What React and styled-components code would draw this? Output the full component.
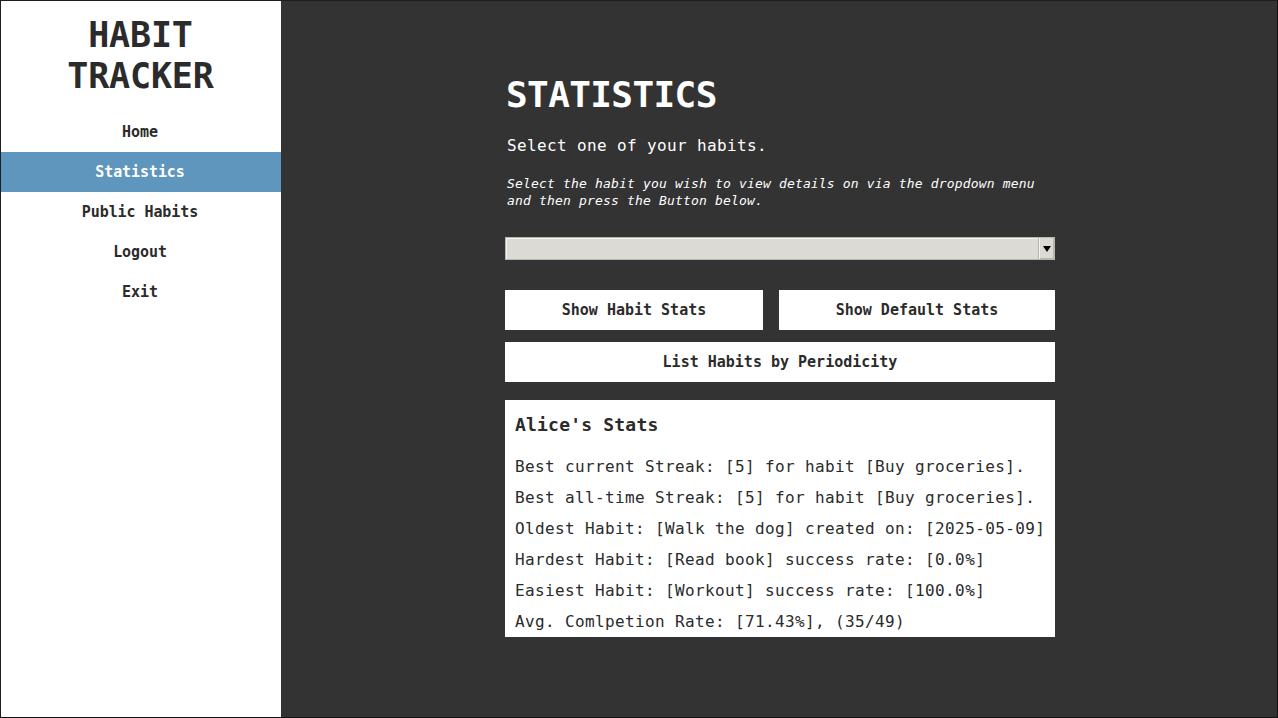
import React from 'react';
import styled, { createGlobalStyle } from 'styled-components';

const GlobalStyle = createGlobalStyle`
  html, body {
    margin: 0;
    padding: 0;
    height: 100%;
    background: #333333;
  }
  #root {
    height: 100%;
  }
  * {
    box-sizing: border-box;
  }
`;

const mono = `"DejaVu Sans Mono", "Liberation Mono", monospace`;

// whole window, thin dark frame round it
const Frame = styled.div`
  display: flex;
  width: 1278px;
  height: 718px;
  border: 1px solid #1e1e1e;
  border-right-color: #111;
  border-bottom-color: #111;
  background: #333333;
  font-family: ${mono};
  overflow: hidden;
`;

const Sidebar = styled.nav`
  width: 280px;
  flex-shrink: 0;
  background: #ffffff;
  display: flex;
  flex-direction: column;
  padding-top: 14px;
`;

const Brand = styled.h1`
  margin: 0 0 15px -1px;
  font-size: 35px;
  line-height: 41px;
  font-weight: bold;
  letter-spacing: -0.15px;
  text-align: center;
  color: #2b2b2b;
`;

const NavItem = styled.a`
  display: flex;
  align-items: center;
  justify-content: center;
  height: 40px;
  padding-right: 2px;
  font-size: 15px;
  font-weight: bold;
  letter-spacing: -0.08px;
  color: ${p => (p.$active ? '#ffffff' : '#2b2b2b')};
  background: ${p => (p.$active ? '#5e96be' : 'transparent')};
  text-decoration: none;
  cursor: pointer;
`;

const Main = styled.main`
  flex: 1;
  display: flex;
  justify-content: center;
  padding: 72px 0 0 2px;
`;

const Column = styled.section`
  width: 550px;
  display: flex;
  flex-direction: column;
`;

const Title = styled.h2`
  margin: 0 0 0 1px;
  font-size: 36px;
  line-height: 44px;
  font-weight: bold;
  letter-spacing: -0.6px;
  color: #ffffff;
`;

const Lead = styled.p`
  margin: 19px 0 0 2px;
  font-size: 16px;
  line-height: 20px;
  letter-spacing: 0.37px;
  color: #ffffff;
`;

const Hint = styled.p`
  margin: 18.5px 0 0 2px;
  font-size: 13px;
  line-height: 17px;
  font-style: italic;
  letter-spacing: 0.17px;
  color: #ffffff;
`;

const Combo = styled.div`
  margin-top: 28.5px;
  height: 23px;
  display: flex;
  border: 1px solid #b9b6ae;
  background: #dcdad5;
`;

const ComboField = styled.div`
  flex: 1;
  border-top: 1px solid #f4f3f0;
  border-left: 1px solid #f4f3f0;
`;

const ComboArrow = styled.div`
  width: 15px;
  display: flex;
  align-items: center;
  justify-content: center;
  border-left: 1px solid #f4f3f0;
  box-shadow: inset -1px -1px 0 #b9b6ae, -1px 0 0 #b9b6ae;

  &::after {
    content: '';
    border-top: 6px solid #000;
    border-left: 4px solid transparent;
    border-right: 4px solid transparent;
  }
`;

const ButtonRow = styled.div`
  display: flex;
  gap: 16px;
  margin-top: ${p => p.$top || 12}px;
`;

const Button = styled.button`
  flex: 1 1 auto;
  height: 40px;
  border: none;
  background: #ffffff;
  font-family: ${mono};
  font-size: 15px;
  font-weight: bold;
  color: #2b2b2b;
  padding: 0;
  cursor: pointer;
`;

const StatsBox = styled.div`
  margin-top: 18px;
  height: 237px;
  overflow: hidden;
  background: #ffffff;
  padding: 14px 10px 0;
  color: #2b2b2b;
`;

const StatsTitle = styled.h3`
  margin: 0 0 14.5px;
  font-size: 18px;
  line-height: 22px;
  font-weight: bold;
  letter-spacing: 0.2px;
`;

const StatLine = styled.p`
  margin: 0;
  font-size: 16px;
  line-height: 31px;
  letter-spacing: 0.37px;
  white-space: nowrap;
`;

const navItems = ['Home', 'Statistics', 'Public Habits', 'Logout', 'Exit'];

const stats = [
  'Best current Streak: [5] for habit [Buy groceries].',
  'Best all-time Streak: [5] for habit [Buy groceries].',
  'Oldest Habit: [Walk the dog] created on: [2025-05-09]',
  'Hardest Habit: [Read book] success rate: [0.0%]',
  'Easiest Habit: [Workout] success rate: [100.0%]',
  'Avg. Comlpetion Rate: [71.43%], (35/49)',
];

export default function App() {
  return (
    <>
      <GlobalStyle />
      <Frame>
        <Sidebar>
          <Brand>
            HABIT
            <br />
            TRACKER
          </Brand>
          {navItems.map(item => (
            <NavItem key={item} $active={item === 'Statistics'}>
              {item}
            </NavItem>
          ))}
        </Sidebar>
        <Main>
          <Column>
            <Title>STATISTICS</Title>
            <Lead>Select one of your habits.</Lead>
            <Hint>
              Select the habit you wish to view details on via the dropdown menu
              <br />
              and then press the Button below.
            </Hint>
            <Combo>
              <ComboField />
              <ComboArrow />
            </Combo>
            <ButtonRow $top={30}>
              <Button>Show Habit Stats</Button>
              <Button>Show Default Stats</Button>
            </ButtonRow>
            <ButtonRow>
              <Button>List Habits by Periodicity</Button>
            </ButtonRow>
            <StatsBox>
              <StatsTitle>Alice's Stats</StatsTitle>
              {stats.map(line => (
                <StatLine key={line}>{line}</StatLine>
              ))}
            </StatsBox>
          </Column>
        </Main>
      </Frame>
    </>
  );
}
